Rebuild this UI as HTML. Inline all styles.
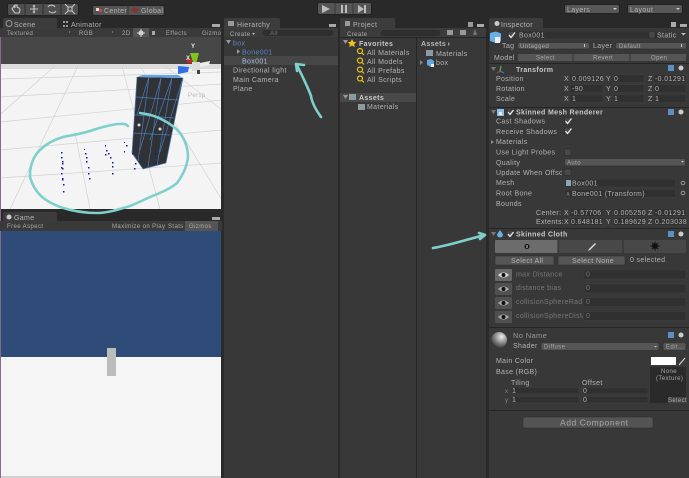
<!DOCTYPE html>
<html><head><meta charset="utf-8"><style>
html,body{margin:0;padding:0;background:#2a2a2a;width:689px;height:478px;overflow:hidden}
svg{display:block}
text{font-family:"Liberation Sans",sans-serif;font-size:7px;fill:#b4b4b4;letter-spacing:.35px}
.b{font-weight:bold;fill:#c8c8c8}
.d{fill:#777}
.blue{fill:#5c86c8}
.s{font-size:6px;letter-spacing:.4px;fill:#aaa}
.f{fill:#303030;stroke:#414141;stroke-width:.5}
.btn{fill:#555;stroke:#2a2a2a;stroke-width:.5}
.tab{fill:#3c3c3c}
.ck{fill:none;stroke:#eee;stroke-width:1.2}
.box{fill:#484848;stroke:#262626;stroke-width:.5}
.tl{fill:none;stroke:#7fd0cd;stroke-width:2.6;stroke-linecap:round;stroke-linejoin:round}
</style></head><body>
<svg width="689" height="478" viewBox="0 0 689 478" xmlns="http://www.w3.org/2000/svg">
<defs>
<radialGradient id="sp" cx=".65" cy=".3" r=".8"><stop offset="0" stop-color="#eee"/><stop offset=".5" stop-color="#888"/><stop offset="1" stop-color="#222"/></radialGradient>
<clipPath id="c"><rect x="516" y="268" width="67" height="56"/></clipPath>
</defs>
<rect width="689" height="478" fill="#292929"/>

<!-- toolbar -->
<rect x="7.500" y="3.500" width="71" height="12" rx="2" fill="#4e4e4e" stroke="#222"/>
<path d="M25 3V15M43 3V15M61 3V15" stroke="#2f2f2f"/>
<g fill="none" stroke="#c4c4c4" stroke-width="1.100">
<path d="M12 9l2-3 1 2 0-3 2 0 0 2 2 1 1 2-1 3-4 0z"/>
<path d="M34 5v8M30 9h8M34 5l-1 1.500M34 5l1 1.500M34 13l-1-1.500M34 13l1-1.500"/>
<path d="M48 7a4 3.500 0 0 1 7 0M56 11a4 3.500 0 0 1-7 0"/>
<rect x="68" y="7" width="4" height="4"/><path d="M65 4l3 3M75 4l-3 3M65 14l3-3M75 14l-3-3"/>
</g>
<rect x="92.500" y="5.500" width="72" height="10" rx="2" fill="#545454" stroke="#232323"/>
<path d="M128 5.500V15.500" stroke="#333"/>
<rect x="96" y="8" width="3" height="3" fill="#ddd"/><rect x="99" y="9" width="3" height="3" fill="#c44"/>
<circle cx="135" cy="10" r="3" fill="#833"/>
<text x="104" y="13">Center</text><text x="141" y="13">Global</text>
<rect x="317.500" y="2.500" width="54" height="12" rx="2" fill="#555" stroke="#222"/>
<path d="M335 3V14M353 3V14" stroke="#383838"/>
<path d="M322 5l8 4-8 4z" fill="#bdbdbd"/>
<path d="M341 5h2v8h-2zM345 5h2v8h-2z" fill="#bdbdbd"/>
<path d="M358 5l6 4-6 4zM364 5h2v8h-2z" fill="#bdbdbd"/>
<rect x="564.500" y="4.500" width="55" height="9" rx="2" fill="#575757" stroke="#222"/>
<rect x="627.500" y="4.500" width="55" height="9" rx="2" fill="#575757" stroke="#222"/>
<text x="567" y="12">Layers</text><text x="630" y="12">Layout</text>
<path d="M613 8h4l-2 2zM676 8h4l-2 2z" fill="#ccc"/>

<!-- scene panel -->
<rect x="0" y="28" width="222" height="9" fill="#3a3a3a"/>
<rect class="tab" x="3" y="18" width="54" height="11" rx="2"/>
<circle cx="9" cy="23.500" r="3" fill="none" stroke="#999"/>
<text x="14" y="27">Scene</text>
<path d="M63 21h2v2h-2zM63 25h2v2h-2zM66 21h2v2h-2zM66 25h2v2h-2z" fill="#999"/>
<text x="71" y="27">Animator</text>
<rect x="212" y="24" width="8" height="3" fill="#aaa"/>
<text x="7" y="35" class="s">Textured</text><text x="79" y="35" class="s">RGB</text>
<text x="122" y="35" class="s">2D</text>
<rect x="133" y="28" width="16" height="9" fill="#555"/>
<circle cx="141" cy="33" r="2.500" fill="#ddd"/>
<path d="M141 29v8M137 33h8" stroke="#ccc"/>
<path d="M152 31h3v4h-3z" fill="#aaa"/>
<text x="166" y="35" class="s">Effects</text><text x="202" y="35" class="s">Gizmos</text>
<path d="M69 31l1 1-1 1zM112 31l1 1-1 1z" fill="#aaa"/>
<rect x="0" y="37" width="222" height="172" fill="#f4f4f4"/>
<rect x="0" y="37" width="222" height="27" fill="#474747"/>
<rect x="0" y="64" width="222" height="5" fill="#dcdcdc"/>
<g stroke="#d2d2d2" stroke-width=".7" fill="none">
<path d="M0 79L222 72M0 97L222 84M0 122L222 100M0 150L222 130M0 178L222 163"/>
<path d="M55 66L-40 150M78 66L10 209M75 133L90 209M122 66L160 209M140 66L222 200M165 66L222 110"/>
</g>
<!-- cube -->
<path d="M137 77L183 78L166 163L143 169L132 153Z" fill="#303236"/>
<path d="M137 77L183 78L178 75L142 75Z" fill="#63a6e8"/>
<g stroke="#4a7db8" stroke-width=".7" fill="none">
<path d="M137 77L132 153M149 77L138 161M161 78L148 167M172 78L157 166M183 78L166 163"/>
<path d="M136 97L178 100M135 115L174 118M133 133L170 135M132 153L143 169L166 163"/>
<path d="M149 77L137 115M161 78L140 150M172 78L150 140M183 78L160 152"/>
</g>
<circle cx="139" cy="125" r="1.500" fill="#ddd"/><circle cx="160" cy="129" r="1.500" fill="#ddd"/>
<!-- blue dots -->
<g fill="#1010b8">
<path d="M61 152h1.500v1.500h-1.500zM61 157h1.500v1.500h-1.500zM62 161h1.500v1.500h-1.500zM62 163h1.500v1.500h-1.500zM61 167h1.500v1.500h-1.500zM62 168h1.500v1.500h-1.500zM61 173h1.500v1.500h-1.500zM62 178h1.500v1.500h-1.500zM62 179h1.500v1.500h-1.500zM63 184h1.500v1.500h-1.500zM63 191h1.500v1.500h-1.500z"/>
<path d="M84 149h1v1h-1zM85 153h1.500v1.500h-1.500zM86 157h1.500v1.500h-1.500zM86 161h1.500v1.500h-1.500zM88 167h1.500v1.500h-1.500zM88 173h1.500v1.500h-1.500zM89 178h1.500v1.500h-1.500z"/>
<path d="M105 145h1v1.500h-1zM106 150h1.500v1.500h-1.500zM105 154h1.500v1.500h-1.500zM108 153h1.500v1.500h-1.500zM110 157h1.500v1.500h-1.500zM112 162h1.500v1.500h-1.500zM112 166h1.500v1.500h-1.500zM112 173h1.500v1.500h-1.500z"/>
<path d="M124 142h1v1h-1zM126 145h1.500v1.500h-1.500zM124 151h1v1.500h-1zM132 153h1.500v1.500h-1.500zM135 163h1.500v1.500h-1.500zM134 168h1.500v1.500h-1.500zM155 153h1.500v1.500h-1.500zM155 162h1.500v1.500h-1.500z"/>
</g>
<!-- gizmo -->
<path d="M190 53h9l-4 15z" fill="#7fc41f"/>
<path d="M178 66l11 1-1 5-10 2z" fill="#2f6fe8"/>
<rect x="187" y="59" width="5" height="4" fill="#cc2222"/>
<rect x="192" y="62" width="8" height="9" fill="#ddd"/>
<path d="M200 63l10-2-1 4-9 2z" fill="#eee"/>
<path d="M193 72l3-1-3 9-2-2z" fill="#eee"/>
<rect x="197" y="70" width="3" height="4" fill="#444"/>
<text x="191" y="48" style="fill:#eee;font-size:6px;font-weight:bold">Y</text>
<text x="186" y="60" style="fill:#eee;font-size:6px;font-weight:bold">X</text>
<text x="188" y="97" style="fill:#bbb;font-size:6px">Persp</text>

<rect x="0" y="209" width="222" height="3" fill="#2a2a2a"/>
<rect x="0" y="37" width="1" height="441" fill="#8a6a8a"/>
<rect x="221" y="28" width="3" height="450" fill="#2a2a2a"/>

<!-- game panel -->
<rect x="0" y="221" width="222" height="10" fill="#3a3a3a"/>
<rect class="tab" x="3" y="212" width="54" height="10" rx="2"/>
<circle cx="9" cy="217" r="2.500" fill="#ccc"/>
<text x="14" y="220">Game</text>
<rect x="212" y="217" width="8" height="3" fill="#aaa"/>
<text x="7" y="228" class="s">Free Aspect</text>
<text x="112" y="228" class="s">Maximize on Play</text>
<text x="168" y="228" class="s">Stats</text>
<rect x="185" y="221" width="33" height="10" fill="#555"/>
<text x="189" y="228" class="s">Gizmos</text>
<rect x="1" y="231" width="220" height="126" fill="#2f4b78"/>
<rect x="1" y="357" width="220" height="121" fill="#f5f5f5"/>
<rect x="1" y="476" width="220" height="2" fill="#d0d0d0"/>
<rect x="107" y="348" width="9" height="28" fill="#bcbcbc"/>

<!-- teal circle -->
<path class="tl" d="M128 126C125 123 122 124 118 124C108 125 100 128 93 130C82 134 72 135 63 137C53 140 45 145 40 150C35 155 33 159 32 163C30 168 30 172 30 177C32 184 36 191 40 195C46 201 53 204 60 207C72 211 85 213 97 213C108 213 120 209 130 206C137 203 144 200 150 197C160 193 170 189 177 183C183 175 187 166 188 157C188 148 185 140 180 133C175 127 169 123 163 120C156 116 148 114 140 113"/>

<!-- hierarchy -->
<rect x="224" y="28" width="114" height="450" fill="#383838"/>
<rect x="224" y="28" width="114" height="9" fill="#3c3c3c"/>
<rect class="tab" x="224" y="18" width="56" height="11" rx="2"/>
<text x="237" y="27">Hierarchy</text>
<rect x="228" y="21" width="6" height="5" fill="#999"/>
<rect x="329" y="24" width="7" height="3" fill="#aaa"/>
<text x="230" y="36" class="s">Create</text>
<path d="M252 33h3l-1.500 2z" fill="#bbb"/>
<rect x="262" y="29.500" width="72" height="7" rx="3.500" fill="#2e2e2e" stroke="#444" stroke-width=".5"/>
<text x="270" y="35" class="s" style="fill:#777">All</text>
<rect x="224" y="56" width="114" height="9" fill="#464646"/>
<path d="M226 40h5l-2.500 4z" fill="#999"/>
<path d="M237 49v5l3-2.500z" fill="#999"/>
<text x="233" y="45.500" class="blue">box</text>
<text x="242" y="54.500" class="blue">Bone001</text>
<text x="242" y="63.500" style="fill:#a8c0e0">Box001</text>
<text x="233" y="72.500">Directional light</text>
<text x="233" y="82">Main Camera</text>
<text x="233" y="91">Plane</text>
<path class="tl" d="M321 117C316 110 312 103 311 96C307 85 302 76 297 65"/>
<path class="tl" d="M296 64L297 71M296 64L304 65"/>

<!-- project -->
<rect x="340" y="28" width="146" height="450" fill="#383838"/>
<rect x="340" y="28" width="146" height="9" fill="#3c3c3c"/>
<rect class="tab" x="340" y="18" width="55" height="11" rx="2"/>
<text x="353" y="27">Project</text>
<rect x="345" y="21" width="5" height="5" fill="#999"/>
<rect x="468" y="22" width="5" height="5" fill="#999"/><rect x="477" y="24" width="7" height="3" fill="#aaa"/>
<text x="347" y="36" class="s">Create</text>
<rect x="380" y="29.500" width="61" height="7" rx="3.500" fill="#2e2e2e" stroke="#444" stroke-width=".5"/>
<rect x="447" y="30" width="6" height="5" fill="#999"/><rect x="460" y="30" width="6" height="5" fill="#999"/><path d="M475 29l2 6h-4z" fill="#777"/>
<rect x="416" y="38" width="1" height="440" fill="#262626"/>
<rect x="340" y="37" width="146" height="1" fill="#262626"/>
<rect x="340" y="93" width="76" height="9" fill="#484848"/>
<path d="M343 40h5l-2.500 4zM343 95h5l-2.500 4z" fill="#999"/>
<path d="M352 39l1.300 2.800 3 .3-2.200 2 .7 3-2.800-1.600-2.800 1.600.7-3-2.200-2 3-.3z" fill="#f4c020"/>
<text x="359" y="46" class="b">Favorites</text>
<rect x="349" y="94" width="7" height="6" fill="#8e9aa2"/>
<text x="359" y="100" class="b">Assets</text>
<g fill="none" stroke="#e8c020" stroke-width="1.200">
<circle cx="360" cy="51" r="2.500"/><path d="M362 53l2 2"/>
<circle cx="360" cy="60.500" r="2.500"/><path d="M362 62.500l2 2"/>
<circle cx="360" cy="69.500" r="2.500"/><path d="M362 71.500l2 2"/>
<circle cx="360" cy="78.500" r="2.500"/><path d="M362 80.500l2 2"/>
</g>
<text x="367" y="55">All Materials</text>
<text x="367" y="64">All Models</text>
<text x="367" y="73">All Prefabs</text>
<text x="367" y="82">All Scripts</text>
<rect x="358" y="104" width="7" height="6" fill="#8e9aa2"/>
<text x="367" y="109">Materials</text>
<text x="421" y="46" class="b" style="fill:#b8b8b8">Assets</text>
<path d="M448 42v4l2-2z" fill="#999"/>
<rect x="426" y="50" width="7" height="6" fill="#8e9aa2"/>
<text x="436" y="56">Materials</text>
<path d="M420 60v5l3-2.500z" fill="#888"/>
<path d="M427 60l4-1 3 2v5l-3 1-4-2z" fill="#5fa8e0"/><rect x="431" y="64" width="3" height="3" fill="#eee"/>
<text x="436" y="65">box</text>

<!-- inspector -->
<rect x="489" y="28" width="200" height="450" fill="#383838"/>
<rect class="tab" x="489" y="18" width="54" height="11" rx="2"/>
<circle cx="497" cy="23.500" r="2.500" fill="#ccc"/>
<text x="501" y="27">Inspector</text>
<rect x="671" y="22" width="5" height="5" fill="#aaa"/><rect x="680" y="24" width="7" height="3" fill="#aaa"/>
<path d="M490 33l6-1.500 5 2v8l-5 1.500-6-2z" fill="#6ab0e8"/><rect x="495" y="37" width="5" height="6" fill="#f0f0f0"/>
<rect class="box" x="508" y="31.500" width="6.500" height="6.500"/><path class="ck" d="M509 35l2 2.500 4-5"/>
<rect class="f" x="517.500" y="31" width="141" height="8"/>
<text x="519" y="37.500">Box001</text>
<rect class="box" x="649" y="31.500" width="6" height="6.500"/>
<text x="657" y="37.500">Static</text><path d="M681 33h5l-2.500 2.500z" fill="#bbb"/>
<rect class="btn" x="517.500" y="42.500" width="72" height="6.500" rx="2"/>
<rect class="btn" x="615.500" y="42.500" width="71" height="6.500" rx="2"/>
<text x="502" y="48">Tag</text><text x="593" y="48">Layer</text>
<text x="520" y="48" class="s">Untagged</text><text x="619" y="48" class="s">Default</text>
<path d="M584 44h1v3h-1zM681 44h1v3h-1z" fill="#ccc"/>
<text x="494" y="60">Model</text>
<rect class="btn" x="517.500" y="53.500" width="169" height="8" rx="1"/>
<path d="M573 53.500v8M630 53.500v8" stroke="#333"/>
<text x="536" y="59.500" class="s">Select</text><text x="593" y="59.500" class="s">Revert</text><text x="651" y="59.500" class="s">Open</text>
<rect x="489" y="63" width="200" height="1" fill="#262626"/>

<!-- transform -->
<path d="M491 67h5l-2.500 4z" fill="#777"/>
<path d="M500 71l-3 2" stroke="#d03030" stroke-width="1.200"/><path d="M500 71l4 2" stroke="#3a70e0" stroke-width="1.200"/><path d="M500 71l1-5" stroke="#50c030" stroke-width="1.200"/>
<text x="516" y="72" class="b">Transform</text>
<rect x="668" y="65" width="6" height="6" fill="#5c8fc4"/><circle cx="681" cy="68" r="2.500" fill="#ccc"/>
<rect class="f" x="570" y="74.500" width="33" height="8"/><rect class="f" x="613" y="74.500" width="31" height="8"/><rect class="f" x="654" y="74.500" width="32" height="8"/>
<rect class="f" x="570" y="84.500" width="33" height="8"/><rect class="f" x="613" y="84.500" width="31" height="8"/><rect class="f" x="654" y="84.500" width="32" height="8"/>
<rect class="f" x="570" y="94.500" width="33" height="8"/><rect class="f" x="613" y="94.500" width="31" height="8"/><rect class="f" x="654" y="94.500" width="32" height="8"/>
<text x="496" y="81">Position</text><text x="564" y="81">X</text><text x="572" y="81">0.009126</text><text x="606" y="81">Y</text><text x="614" y="81">0</text><text x="648" y="81">Z</text><text x="655" y="81">-0.01291</text>
<text x="496" y="91">Rotation</text><text x="564" y="91">X</text><text x="572" y="91">-90</text><text x="606" y="91">Y</text><text x="614" y="91">0</text><text x="648" y="91">Z</text><text x="655" y="91">0</text>
<text x="496" y="101">Scale</text><text x="564" y="101">X</text><text x="572" y="101">1</text><text x="606" y="101">Y</text><text x="614" y="101">1</text><text x="648" y="101">Z</text><text x="655" y="101">1</text>
<rect x="489" y="107" width="200" height="1" fill="#262626"/>

<!-- skinned mesh renderer -->
<path d="M491 110h5l-2.500 4z" fill="#777"/>
<rect x="497" y="109" width="7" height="7" fill="#8fc0e8"/><rect x="499" y="112" width="3" height="3" fill="#eee"/>
<rect class="box" x="507" y="109" width="6" height="6"/><path class="ck" d="M508 112l2 2.500 3.500-4.500"/>
<text x="516" y="114.500" class="b">Skinned Mesh Renderer</text>
<rect x="668" y="109" width="6" height="6" fill="#5c8fc4"/><circle cx="681" cy="112" r="2.500" fill="#ccc"/>
<text x="496" y="123.500">Cast Shadows</text>
<rect class="box" x="564.500" y="118" width="6.500" height="6.500"/><path class="ck" d="M565.500 121l2 2.500 4-5"/>
<text x="496" y="134">Receive Shadows</text>
<rect class="box" x="564.500" y="128" width="6.500" height="6.500"/><path class="ck" d="M565.500 131l2 2.500 4-5"/>
<path d="M491 140v4l3-2z" fill="#888"/><text x="496" y="144">Materials</text>
<text x="496" y="154.500">Use Light Probes</text>
<rect class="box" x="564.500" y="149" width="6.500" height="6.500"/>
<text x="496" y="165">Quality</text>
<rect class="btn" x="564.500" y="158.500" width="121" height="7.500" rx="2"/>
<text x="567" y="164.500" class="s">Auto</text>
<path d="M681 161h3l-1.500 1.500zM681 164h3" fill="#ccc"/>
<text x="496" y="175">Update When Offscre</text>
<rect x="562" y="168" width="2" height="9" fill="#383838"/>
<rect class="box" x="564.500" y="169" width="6.500" height="6.500"/>
<text x="496" y="185">Mesh</text>
<rect class="f" x="564.500" y="179" width="111" height="8"/>
<rect x="566" y="180" width="5" height="6" fill="#8ca6b8"/>
<text x="572" y="185.500">Box001</text>
<circle cx="683" cy="183" r="1.800" fill="none" stroke="#999"/>
<text x="496" y="195.500">Root Bone</text>
<rect class="f" x="564.500" y="189.500" width="111" height="8"/>
<path d="M568 192v3" stroke="#50c030"/><path d="M566 195h2" stroke="#d03030"/><path d="M568 195h2" stroke="#3a70e0"/>
<text x="572" y="196">Bone001 (Transform)</text>
<circle cx="683" cy="193" r="1.800" fill="none" stroke="#999"/>
<text x="496" y="206">Bounds</text>
<text x="536" y="215">Center:</text><text x="564" y="215">X</text><rect class="f" x="570" y="208.500" width="33" height="8"/><text x="571" y="215">-0.57706</text><text x="606" y="215">Y</text><rect class="f" x="613" y="208.500" width="31" height="8"/><text x="614" y="215">0.005250</text><text x="648" y="215">Z</text><rect class="f" x="654" y="208.500" width="32" height="8"/><text x="655" y="215">-0.01291</text>
<text x="536" y="224">Extents:</text><text x="564" y="224">X</text><rect class="f" x="570" y="217.500" width="33" height="8"/><text x="571" y="224">0.648181</text><text x="606" y="224">Y</text><rect class="f" x="613" y="217.500" width="31" height="8"/><text x="614" y="224">0.189629</text><text x="648" y="224">Z</text><rect class="f" x="654" y="217.500" width="32" height="8"/><text x="655" y="224">0.203038</text>
<rect x="489" y="228" width="200" height="1" fill="#262626"/>

<!-- skinned cloth -->
<path d="M491 232h5l-2.500 4z" fill="#777"/>
<path d="M500 230l3 4.500a3 3 0 0 1-6 0z" fill="#6ab0e8"/>
<rect class="box" x="507" y="231" width="6" height="6"/><path class="ck" d="M508 234l2 2.500 3.500-4.500"/>
<text x="516" y="236.500" class="b">Skinned Cloth</text>
<rect x="668" y="231" width="6" height="6" fill="#5c8fc4"/><circle cx="681" cy="234" r="2.500" fill="#ccc"/>
<rect x="495" y="240" width="191" height="13" rx="1" fill="#484848"/>
<rect x="495" y="240" width="63" height="13" rx="1" fill="#6c6c6c"/>
<path d="M558 240v13M623 240v13" stroke="#2e2e2e"/>
<circle cx="527" cy="246.500" r="2.500" fill="#111"/><rect x="526.500" y="245" width="1" height="3" fill="#ddd"/>
<path d="M588 251l2-1 6-6-1-1-6 6z" fill="#ddd"/>
<circle cx="655" cy="246" r="2.800" fill="#111"/><path d="M655 241.500v9M650.500 246h9M652 243l6 6M658 243l-6 6" stroke="#111"/>
<rect class="btn" x="495" y="256" width="59" height="9" rx="1"/>
<rect class="btn" x="558" y="256" width="67" height="9" rx="1"/>
<text x="511" y="263">Select All</text><text x="572" y="263">Select None</text>
<text x="630" y="262">0 selected</text>
<rect x="495" y="269" width="17" height="12" rx="1" fill="#686868"/>
<rect x="495" y="283" width="17" height="12" rx="1" fill="#505050"/>
<rect x="495" y="297" width="17" height="12" rx="1" fill="#505050"/>
<rect x="495" y="311" width="17" height="12" rx="1" fill="#505050"/>
<path d="M498 275q5.500-5 11 0q-5.500 5-11 0z" fill="#ddd"/><circle cx="503.500" cy="275" r="2" fill="#111"/>
<path d="M498 289q5.500-5 11 0q-5.500 5-11 0z" fill="#aaa"/><circle cx="503.500" cy="289" r="2" fill="#111"/>
<path d="M498 303q5.500-5 11 0q-5.500 5-11 0z" fill="#aaa"/><circle cx="503.500" cy="303" r="2" fill="#111"/>
<path d="M498 317q5.500-5 11 0q-5.500 5-11 0z" fill="#aaa"/><circle cx="503.500" cy="317" r="2" fill="#111"/>
<rect class="f" x="584" y="270" width="102" height="9"/><rect class="f" x="584" y="284" width="102" height="9"/><rect class="f" x="584" y="297.500" width="102" height="9"/><rect class="f" x="584" y="311.500" width="102" height="9"/>
<g clip-path="url(#c)">
<text x="516" y="276.500" class="d">max Distance</text>
<text x="516" y="290" class="d">distance bias</text>
<text x="516" y="304" class="d">collisionSphereRadius</text>
<text x="516" y="318" class="d">collisionSphereDistance</text>
</g>
<text x="586" y="276.500" class="d">0</text><text x="586" y="290" class="d">0</text><text x="586" y="304" class="d">0</text><text x="586" y="318" class="d">0</text>
<rect x="489" y="327" width="200" height="1" fill="#262626"/>

<!-- material -->
<circle cx="499" cy="340" r="8" fill="url(#sp)"/>
<text x="513" y="338" style="font-size:7.500px;fill:#999">No Name</text>
<rect x="668" y="332" width="6" height="6" fill="#5c8fc4"/><circle cx="681" cy="335" r="2.500" fill="#ccc"/>
<text x="513" y="348">Shader</text>
<rect class="btn" x="541" y="342.500" width="118" height="8" rx="2"/>
<text x="544" y="348.500" class="s">Diffuse</text><path d="M654 346h3l-1.500 1.500z" fill="#bbb"/>
<rect class="btn" x="663" y="342.500" width="23" height="8" rx="2"/><text x="666" y="348.500" class="s">Edit...</text>
<text x="496" y="363">Main Color</text>
<rect x="651" y="357" width="25" height="8" fill="#fff"/>
<path d="M679 365l6-7" stroke="#ddd" stroke-width="1"/>
<text x="496" y="374">Base (RGB)</text>
<rect x="650" y="367" width="36" height="36" fill="#2a2a2a"/>
<text x="661" y="373" class="s">None</text><text x="656" y="380" class="s">(Texture)</text>
<rect x="668" y="397" width="18" height="6" fill="#444"/><text x="668" y="402" class="s">Select</text>
<text x="511" y="385">Tiling</text><text x="582" y="385">Offset</text>
<text x="505" y="393" class="s" style="fill:#888">x</text><rect class="f" x="511" y="387.500" width="68" height="6.500"/><text x="512" y="393">1</text><rect class="f" x="582" y="387.500" width="66" height="6.500"/><text x="583" y="393">0</text>
<text x="505" y="402" class="s" style="fill:#888">y</text><rect class="f" x="511" y="396.500" width="68" height="6.500"/><text x="512" y="402">1</text><rect class="f" x="582" y="396.500" width="66" height="6.500"/><text x="583" y="402">0</text>
<rect x="489" y="410" width="200" height="1" fill="#262626"/>
<rect x="523" y="417" width="130" height="11" rx="2" fill="#545454" stroke="#2a2a2a" stroke-width=".5"/>
<text x="560" y="425.500" style="font-size:8.500px;letter-spacing:.55px;fill:#a8a8a8">Add Component</text>

<!-- cloth arrow -->
<path class="tl" d="M433 248C445 246 455 243 466 240C473 238 478 237 484 235"/>
<path class="tl" d="M485 235L479 233M485 235L480 239"/>
</svg>
</body></html>
